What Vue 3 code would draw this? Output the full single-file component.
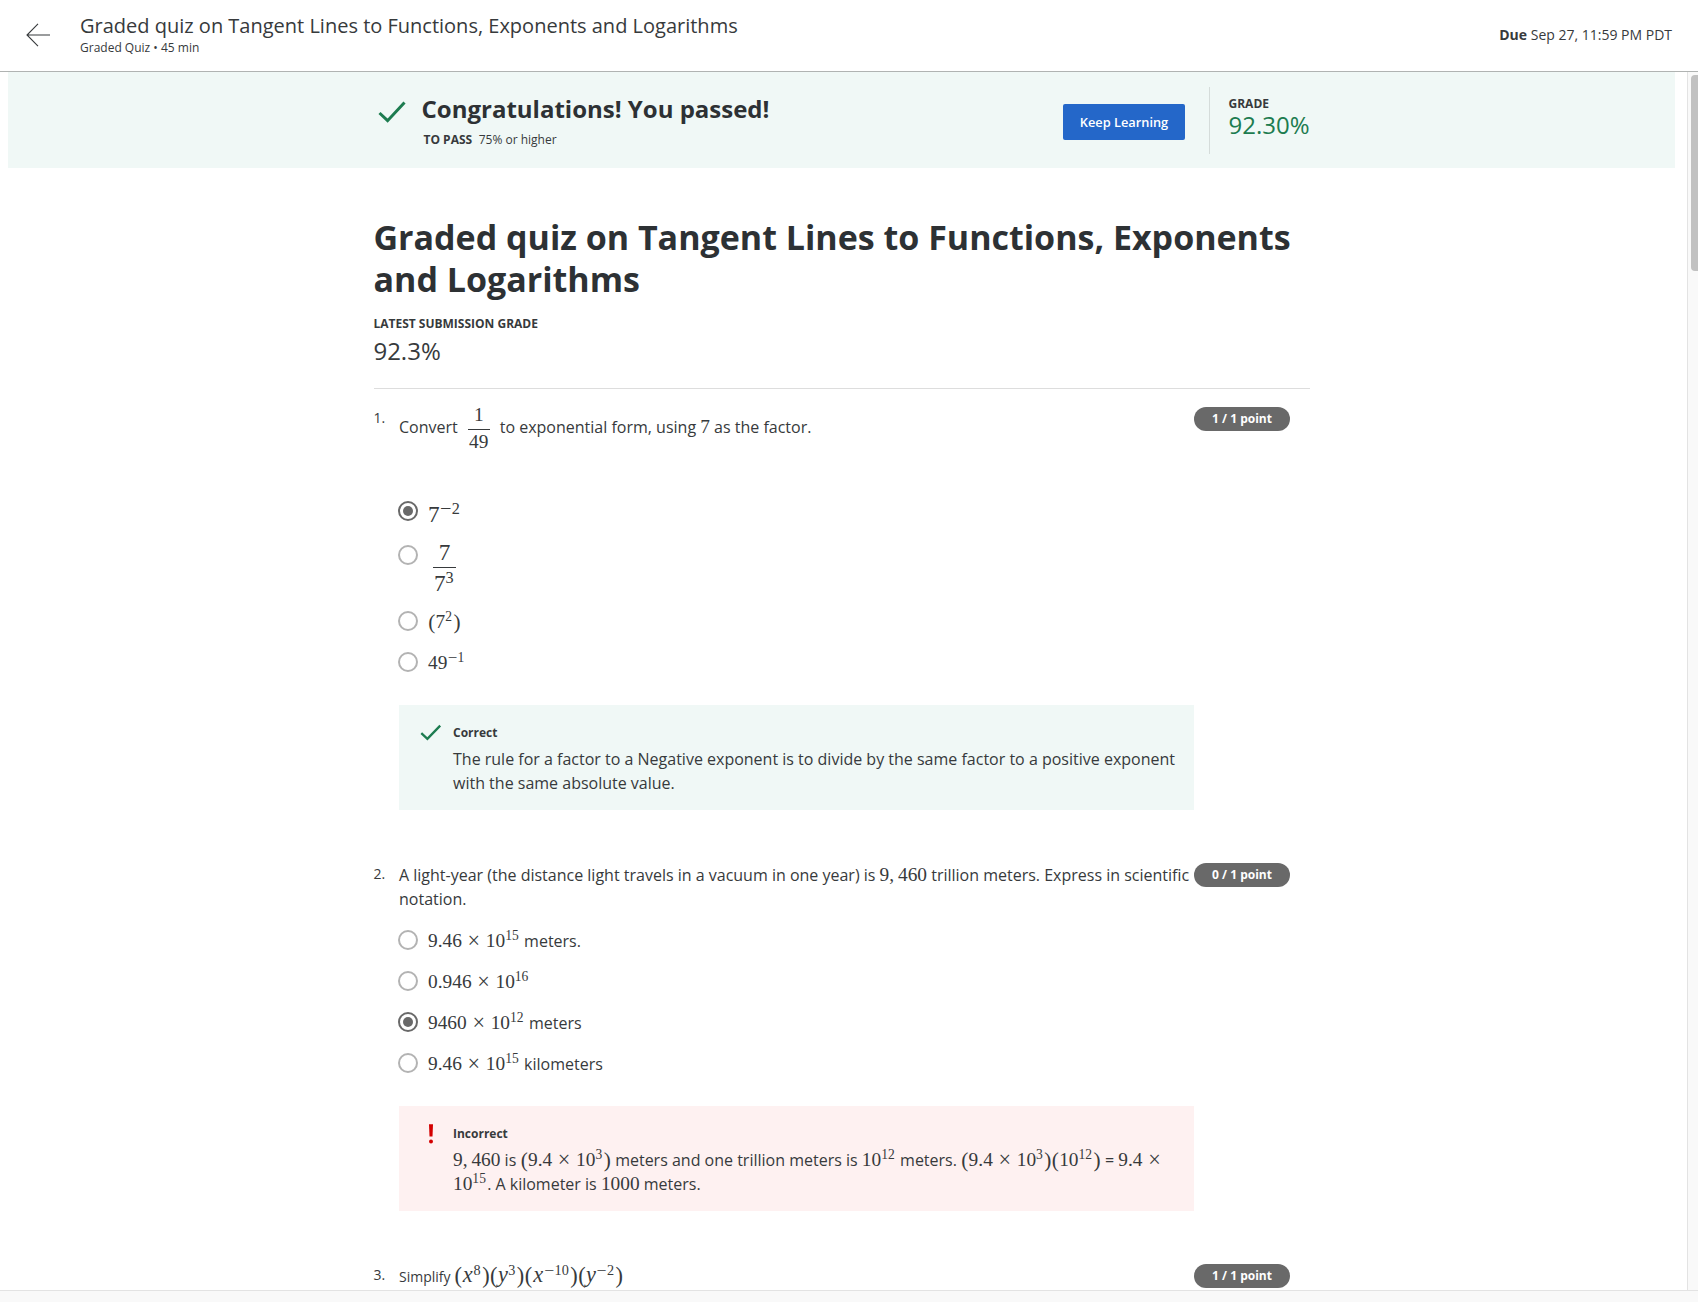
<script setup>
const title = 'Graded quiz on Tangent Lines to Functions, Exponents and Logarithms'
</script>

<template>
  <div class="page">
    <header class="topbar">
      <svg class="back" width="24" height="24" viewBox="0 0 24 24">
        <path d="M12 .8L1 12l11 11.2M1 12h23" fill="none" stroke="#373a3c" stroke-width="1.1" />
      </svg>
      <div class="heading">
        <div class="name">{{ title }}</div>
        <div class="meta">Graded Quiz • 45 min</div>
      </div>
      <div class="due"><b>Due</b> Sep 27, 11:59 PM PDT</div>
    </header>

    <div class="body">
      <main class="content">
        <section class="banner">
          <div class="banner-inner">
            <svg class="check-lg" width="28" height="22" viewBox="0 0 28 22">
              <path d="M1.5 12L9.6 19.7L26.5 1.6" fill="none" stroke="#1d7c50" stroke-width="3" />
            </svg>
            <div class="result">
              <h2>Congratulations! You passed!</h2>
              <p><b>TO PASS</b><span>75% or higher</span></p>
            </div>
            <button class="keep">Keep Learning</button>
            <div class="grade">
              <b>GRADE</b>
              <span>92.30%</span>
            </div>
          </div>
        </section>

        <article class="quiz">
          <h1>{{ title }}</h1>
          <div class="latest">LATEST SUBMISSION GRADE</div>
          <div class="score">92.3%</div>

          <section class="question first">
            <div class="num">1.</div>
            <div class="main">
              <div class="prompt tall">
                <span>Convert</span>
                <span class="frac"><span class="top">1</span><span>49</span></span>
                <span>to exponential form, using <span class="math">7</span> as the factor.</span>
              </div>
              <div class="options">
                <div class="option power">
                  <i class="radio on"></i>
                  <span class="math large">7<sup><span class="minus">−</span>2</sup></span>
                </div>
                <div class="option ratio">
                  <i class="radio"></i>
                  <span class="frac large"><span class="top">7</span><span>7<sup>3</sup></span></span>
                </div>
                <div class="option">
                  <i class="radio"></i>
                  <span class="math"><span class="par">(</span>7<sup>2</sup><span class="par">)</span></span>
                </div>
                <div class="option">
                  <i class="radio"></i>
                  <span class="math">49<sup><span class="minus">−</span>1</sup></span>
                </div>
              </div>
              <div class="feedback good">
                <svg class="check-sm" width="22" height="18" viewBox="0 0 22 18">
                  <path d="M1.3 9.2L7.4 14.9L20.2 1.6" fill="none" stroke="#1d7c50" stroke-width="2.3" />
                </svg>
                <div class="verdict">Correct</div>
                <p>The rule for a factor to a Negative exponent is to divide by the same factor to a positive exponent with the same absolute value.</p>
              </div>
            </div>
            <div class="points">1 / 1 point</div>
          </section>

          <section class="question">
            <div class="num">2.</div>
            <div class="main">
              <div class="prompt">A light-year (the distance light travels in a vacuum in one year) is <span class="math">9<span class="comma">,</span>460</span> trillion meters. Express in scientific notation.</div>
              <div class="options">
                <div class="option">
                  <i class="radio"></i>
                  <span><span class="math">9.46<span class="bin">×</span>10<sup>15</sup></span> meters.</span>
                </div>
                <div class="option">
                  <i class="radio"></i>
                  <span class="math">0.946<span class="bin">×</span>10<sup>16</sup></span>
                </div>
                <div class="option">
                  <i class="radio on"></i>
                  <span><span class="math">9460<span class="bin">×</span>10<sup>12</sup></span> meters</span>
                </div>
                <div class="option">
                  <i class="radio"></i>
                  <span><span class="math">9.46<span class="bin">×</span>10<sup>15</sup></span> kilometers</span>
                </div>
              </div>
              <div class="feedback bad">
                <svg class="bang" width="6" height="20" viewBox="0 0 6 20">
                  <path d="M1 .3h4l-.5 12.2h-3z" fill="#d30001" />
                  <circle cx="3" cy="17.4" r="2" fill="#d30001" />
                </svg>
                <div class="verdict">Incorrect</div>
                <p><span class="math">9<span class="comma">,</span>460</span> is <span class="math"><span class="par">(</span>9.4<span class="bin">×</span>10<sup>3</sup><span class="par">)</span></span> meters and one trillion meters is <span class="math">10<sup>12</sup></span> meters. <span class="math"><span class="par">(</span>9.4<span class="bin">×</span>10<sup>3</sup><span class="par">)</span><span class="par">(</span>10<sup>12</sup><span class="par">)</span></span> = <span class="math">9.4<span class="bin">×</span></span><br><span class="math">10<sup>15</sup></span>. A kilometer is <span class="math">1000</span> meters.</p>
              </div>
            </div>
            <div class="points">0 / 1 point</div>
          </section>

          <section class="question">
            <div class="num">3.</div>
            <div class="main">
              <div class="prompt small">Simplify <span class="math mid"><span class="par">(</span><i class="x">x</i><sup>8</sup><span class="par">)</span><span class="par">(</span><i class="y">y</i><sup>3</sup><span class="par">)</span><span class="par">(</span><i class="x">x</i><sup><span class="minus">−</span>10</sup><span class="par">)</span><span class="par">(</span><i class="y">y</i><sup><span class="minus">−</span>2</sup><span class="par">)</span></span></div>
            </div>
            <div class="points">1 / 1 point</div>
          </section>
        </article>
      </main>
      <aside class="track"><div class="thumb"></div></aside>
    </div>
    <footer class="hscroll"></footer>
  </div>
</template>

<style>
body {
  margin: 0;
  overflow: hidden;
}
</style>

<style scoped>
.page {
  width: 1698px;
  height: 1302px;
  display: flex;
  flex-direction: column;
  overflow: hidden;
  background: #fff;
  color: #373a3c;
  font-family: "Open Sans", sans-serif;
  font-size: 16px;
  line-height: 24px;
}
.page * {
  box-sizing: border-box;
}
h1, h2, p {
  margin: 0;
}
.topbar {
  flex: none;
  height: 72px;
  border-bottom: 1px solid #b0b3b2;
  display: flex;
  padding: 0 26px;
}
.back {
  margin-top: 23px;
}
.heading {
  margin-left: 30px;
  flex: 1;
}
.name {
  margin-top: 11px;
  font-size: 20px;
  line-height: 30px;
}
.meta {
  font-size: 12px;
  line-height: 14px;
}
.due {
  font-size: 14px;
  line-height: 70px;
}
.body {
  flex: 1;
  min-height: 0;
  display: flex;
}
.content {
  flex: 1;
  overflow: hidden;
  padding: 0 12px 0 8px;
}
.banner {
  height: 96px;
  background: #f0f8f6;
}
.banner-inner {
  display: flex;
  margin-left: 370px;
  width: 932px;
}
.check-lg {
  margin-top: 29px;
}
.result {
  margin-left: 15.5px;
  flex: 1;
}
h2 {
  margin-top: 19px;
  font-size: 24px;
  line-height: 36px;
  font-weight: 700;
  color: #2d3134;
}
.result p {
  padding-left: 2px;
  margin-top: 4px;
  font-size: 12px;
  line-height: 18px;
}
.result p span {
  margin-left: 6.5px;
}
.keep {
  width: 122px;
  height: 36px;
  margin-top: 32px;
  padding: 0;
  border: 0;
  border-radius: 2px;
  background: #2467c9;
  color: #fff;
  font: 600 12.8px/36px "Open Sans", sans-serif;
}
.grade {
  margin: 15px 0 0 24px;
  width: 101px;
  height: 67px;
  padding: 8px 0 0 18.5px;
  border-left: 1px solid #d5dcda;
  display: flex;
  flex-direction: column;
}
.grade b {
  font-size: 12px;
  line-height: 18px;
}
.grade span {
  font-size: 24px;
  line-height: 24px;
  color: #1d7c50;
}
.quiz {
  width: 936px;
  margin-left: 366px;
}
h1 {
  padding-top: 48px;
  margin-left: -0.5px;
  font-size: 34px;
  line-height: 42px;
  font-weight: 700;
  color: #2d3134;
}
.latest {
  margin-top: 15px;
  margin-left: -0.6px;
  font-size: 12px;
  line-height: 18px;
  font-weight: 700;
}
.score {
  height: 56px;
  border-bottom: 1px solid #ddd;
  font-size: 24px;
  line-height: 36px;
  text-indent: -0.6px;
}
.question {
  display: flex;
  margin-top: 53px;
}
.question.first {
  margin-top: 18px;
}
.num {
  width: 25px;
  font-size: 14px;
  line-height: 22px;
  text-indent: -0.6px;
}
.main {
  width: 795px;
}
.points {
  width: 96px;
  height: 24px;
  border-radius: 12px;
  background: #696969;
  color: #fff;
  font-size: 12px;
  font-weight: 700;
  text-align: center;
}
.prompt {
  white-space: normal;
}
.prompt.tall {
  height: 74px;
  display: flex;
  padding-top: 8px;
  white-space: nowrap;
}
.prompt.small {
  font-size: 14px;
  height: 26px;
  line-height: 26px;
}
.math, .frac {
  font-family: "Liberation Serif", serif;
  font-size: 19.36px;
  line-height: 0;
  white-space: nowrap;
}
.math.large, .frac.large {
  font-size: 23.2px;
}
.math.mid {
  font-size: 20.33px;
}
.math sup, .frac sup {
  font-size: 0.7em;
  line-height: 0;
  vertical-align: 0.5em;
  margin-right: 0.09em;
}
.bin, .minus, .par, .x, .y {
  display: inline-block;
  text-align: center;
  line-height: 0;
}
.bin {
  font-size: 1.15em;
  width: 0.676em;
  margin: 0 0.2em;
  vertical-align: -0.06em;
}
.minus {
  font-size: 1.25em;
  width: 0.6em;
  vertical-align: -0.06em;
}
.par {
  font-size: 1.1em;
  width: 0.354em;
  vertical-align: -0.04em;
}
.x, .y {
  font-size: 1.1em;
}
.x {
  width: 0.515em;
}
.y {
  width: 0.465em;
}
.comma {
  margin-right: 0.2em;
}
.frac {
  display: flex;
  flex-direction: column;
  align-items: center;
}
.prompt .frac {
  width: 22px;
  margin: -12px 10px 0;
}
.frac > span {
  line-height: 24px;
}
.frac .top {
  width: 100%;
  text-align: center;
  border-bottom: 1px solid #373a3c;
  height: 27px;
}
.options {
  display: flex;
  flex-direction: column;
  gap: 17px;
  padding-top: 18px;
}
.option {
  height: 24px;
  display: flex;
  align-items: flex-start;
}
.option > span:not(.frac) {
  line-height: 24px;
}
.option > .math {
  line-height: 24px;
}
.tall + .options {
  padding-top: 19px;
}
.option.power {
  height: 27px;
}
.option.power .math {
  line-height: 28px;
}
.option.ratio {
  height: 49px;
}
.ratio .frac {
  width: 23px;
  margin: -4px 0 0 5px;
}
.ratio .frac .top {
  height: 28px;
  line-height: 25px;
}
.ratio .frac .top + span {
  line-height: 30px;
}
.radio {
  flex: none;
  width: 20px;
  height: 20px;
  margin: 1px 10px 0 -1px;
  border: 2px solid #b3b3b3;
  border-radius: 50%;
  display: flex;
  align-items: center;
  justify-content: center;
}
.radio.on {
  border-color: #696969;
}
.radio.on::after {
  content: "";
  width: 10px;
  height: 10px;
  border-radius: 50%;
  background: #696969;
}
.feedback {
  position: relative;
  margin-top: 30px;
  height: 105px;
  padding: 18px 0 0 54px;
}
.good {
  background: #f0f8f6;
}
.bad {
  background: #fef1f1;
}
.check-sm {
  position: absolute;
  left: 21px;
  top: 19px;
}
.bang {
  position: absolute;
  left: 29px;
  top: 18px;
}
.verdict {
  font-size: 12px;
  line-height: 20px;
  font-weight: 700;
  margin-bottom: 4px;
}
.track {
  width: 11px;
  border-left: 1px solid #e3e3e3;
  background: #f9f9f9;
  padding: 3px 0 0 3px;
}
.thumb {
  height: 196px;
  border-radius: 4px 0 0 4px;
  background: #c1c1c1;
}
.hscroll {
  flex: none;
  height: 12px;
  border-top: 1px solid #e3e3e3;
  background: #f9f9f9;
}
</style>
